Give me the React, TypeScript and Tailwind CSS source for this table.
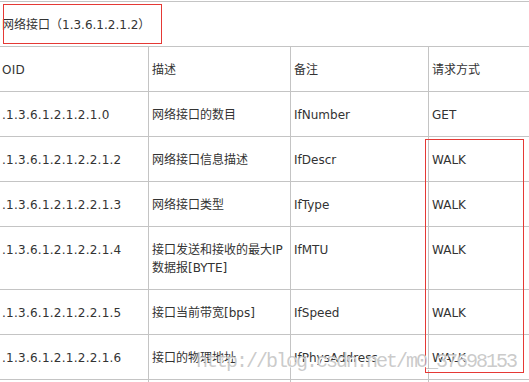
import type { ReactNode } from "react";

type Fila = { oid: string; descricao: ReactNode; nota: string; metodo: string };

const FILAS: Fila[] = [
  { oid: ".1.3.6.1.2.1.2.1.0", descricao: "网络接口的数目", nota: "IfNumber", metodo: "GET" },
  { oid: ".1.3.6.1.2.1.2.2.1.2", descricao: "网络接口信息描述", nota: "IfDescr", metodo: "WALK" },
  { oid: ".1.3.6.1.2.1.2.2.1.3", descricao: "网络接口类型", nota: "IfType", metodo: "WALK" },
  {
    oid: ".1.3.6.1.2.1.2.2.1.4",
    descricao: (
      <>
        接口发送和接收的最大IP
        <br />
        数据报[BYTE]
      </>
    ),
    nota: "IfMTU",
    metodo: "WALK",
  },
  { oid: ".1.3.6.1.2.1.2.2.1.5", descricao: "接口当前带宽[bps]", nota: "IfSpeed", metodo: "WALK" },
  { oid: ".1.3.6.1.2.1.2.2.1.6", descricao: "接口的物理地址", nota: "IfPhysAddress", metodo: "WALK" },
];

const GRADE = "grid grid-cols-[148px_142px_138px_1fr] border-b border-[#c4c4c4]";
const CELULA = "pt-[14px] pb-[12px] pl-[3px] pr-1 border-l border-[#c4c4c4]";

function Linha({ c }: { c: [ReactNode, ReactNode, ReactNode, ReactNode] }) {
  return (
    <div className={GRADE}>
      <div className="pt-[14px] pb-[12px] pl-[2px] pr-1 min-h-[44px] tracking-[0.25px]">{c[0]}</div>
      <div className={CELULA}>{c[1]}</div>
      <div className={CELULA}>{c[2]}</div>
      <div className={CELULA}>{c[3]}</div>
    </div>
  );
}

export default function App() {
  return (
    <div
      className="relative w-[529px] h-[382px] overflow-hidden bg-white pt-px text-[12px] leading-[18px] text-[#333]"
      style={{ fontFamily: "'DejaVu Sans', 'Noto Sans CJK SC', sans-serif" }}
    >
      <div className="border-t border-b border-[#c4c4c4] pt-[14px] pb-[12px] pl-[2px]">网络接口（1.3.6.1.2.1.2）</div>
      <Linha c={["OID", "描述", "备注", "请求方式"]} />
      {FILAS.map((f) => (
        <Linha key={f.oid} c={[f.oid, f.descricao, f.nota, f.metodo]} />
      ))}
      <Linha c={["", "", "", ""]} />

      {/* marcações em vermelho */}
      <div className="absolute left-[3px] top-[4px] w-[159px] h-[40px] border border-[#e53935]" />
      <div className="absolute left-[425px] top-[139px] w-[99px] h-[234px] border border-[#e53935]" />

      {/* marca d'água */}
      <div
        className="absolute left-[196px] top-[352px] text-[20px] leading-[20px] tracking-[-2px] text-[#b4b4b4]/70 whitespace-nowrap [text-shadow:1px_1px_0_#fff]"
        style={{ fontFamily: "'Liberation Mono', monospace" }}
      >
        http://blog.csdn.net/m0_37698153
      </div>
    </div>
  );
}
